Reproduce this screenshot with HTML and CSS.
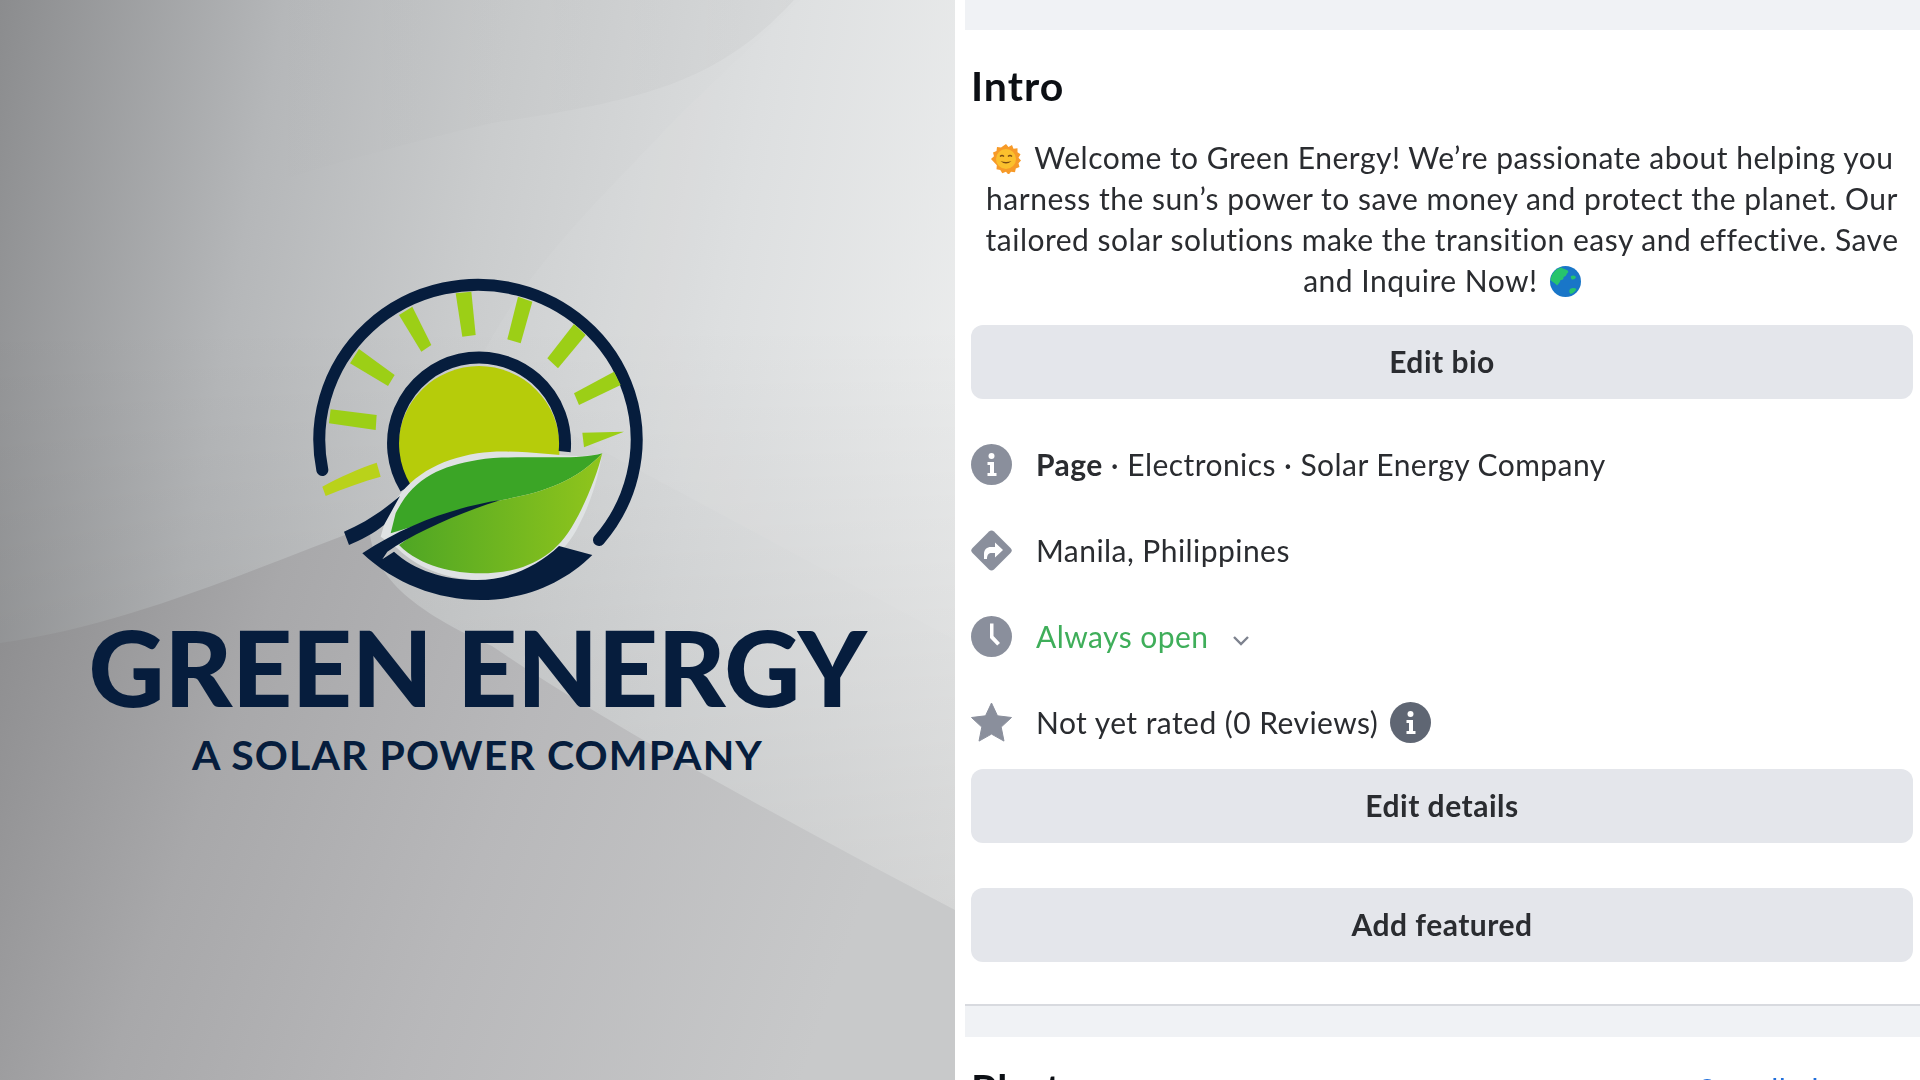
FILE: index.html
```html
<!DOCTYPE html>
<html lang="en">
<head>
  <meta charset="UTF-8">
  <meta name="viewport" content="width=device-width, initial-scale=1.0">
  <title>Green Energy - Intro</title>
  <link rel="stylesheet" href="styles.css">
</head>
<body>
  <div class="page">
    <div class="poster">
      <svg class="poster-bg" viewBox="0 0 955 1080" preserveAspectRatio="none">
        <defs>
          <linearGradient id="lowerShade" x1="0" y1="0" x2="1" y2="0.2">
            <stop offset="0" stop-color="#8b8b8d"/>
            <stop offset="0.3" stop-color="#a8a8aa"/>
            <stop offset="0.6" stop-color="#b8b8ba"/>
            <stop offset="1" stop-color="#c8c9ca"/>
          </linearGradient>
          <linearGradient id="topShade" x1="0" y1="0" x2="1" y2="0">
            <stop offset="0.3" stop-color="#000000" stop-opacity="0"/>
            <stop offset="1" stop-color="#000000" stop-opacity="0.03"/>
          </linearGradient>
        </defs>
        <path d="M794 0C720 80 650 100 492 123C400 145 300 170 200 210L0 80V0Z" fill="url(#topShade)"/>
        <path d="M677 117C600 200 520 270 470 380L955 640V0H800Z" fill="#ffffff" opacity="0.05"/>
        <path d="M0 643C130 625 250 570 369 526C372 570 400 605 492 646C600 720 769 812 955 910V1080H0Z" fill="url(#lowerShade)"/>
      </svg>

      <svg class="logo" viewBox="-8 0 1200 1110">
        <defs>
          <linearGradient id="leafLight" x1="0" y1="0" x2="1" y2="0">
            <stop offset="0" stop-color="#4ea624"/>
            <stop offset="1" stop-color="#90c51c"/>
          </linearGradient>
        </defs>
        <circle cx="595" cy="590" r="242" fill="#b6cc0a"/>
        <path d="M375 715A258 258 0 1 1 852 605" fill="none" stroke="#061d3d" stroke-width="36"/>
        <path d="M125 660A476 465 0 1 1 955 870" fill="none" stroke="#061d3d" stroke-width="36" stroke-linecap="round"/>
        <g fill="#9ccf16">
          <path d="M150 478L288 495L285 540L145 520Z"/>
          <path d="M235 297L342 375L322 408L208 340Z"/>
          <path d="M355 195L395 170L452 285L422 305Z"/>
          <path d="M525 130L572 125L585 255L545 260Z"/>
          <path d="M712 140L755 155L720 280L680 268Z"/>
          <path d="M880 222L915 255L832 355L800 325Z"/>
          <path d="M1000 365L1020 405L895 465L880 430Z"/>
        </g>
        <path d="M125 710C180 680 235 655 288 638L300 680C245 695 190 715 135 738Z" fill="#b9d21a"/>
        <path d="M905 548L1030 545L910 592Z" fill="#9ccf16"/>
        <path d="M965 610C880 635 720 590 590 610C470 630 380 680 320 790L300 860L350 895C420 965 520 990 600 990C730 990 840 940 895 825C935 750 955 670 965 610Z" fill="#dfe2e3"/>
        <path d="M965 610C880 635 720 610 590 630C480 650 400 680 345 790L330 850L650 752C780 730 880 700 965 610Z" fill="#3ba526"/>
        <path d="M965 610C880 700 780 730 650 752C540 775 440 820 355 885C420 950 520 970 600 970C720 970 820 930 880 820C920 750 950 670 965 610Z" fill="url(#leafLight)"/>
        <path d="M190 845C250 820 310 780 358 738L310 825C280 850 240 870 205 885Z" fill="#061d3d"/>
        <path d="M245 910C340 1000 470 1050 600 1050C730 1050 850 1000 935 915L835 888C770 950 680 990 590 990C490 990 400 960 340 905L305 928L320 905C400 850 530 790 660 750C530 770 380 820 245 910Z" fill="#061d3d"/>
      </svg>

      <div class="brand-name">GREEN ENERGY</div>
      <div class="brand-tag">A SOLAR POWER COMPANY</div>
    </div>

    <div class="profile">
      <div class="band band-top"></div>

      <section class="intro">
        <h2 class="title">Intro</h2>
        <p class="bio">
          <svg class="emoji emoji-sun" viewBox="0 0 30 30">
            <path d="M15 0l2.500 3 3.500-2 1.500 3.700 4-.5 0 4 3 2-2 3.500 2.500 2.800-2.500 2.800 1 3.700-3.700 1.500-.8 3.800-4-.5-2.500 3-2.500-3-3.700 1.500-2-3.300-3.800-.7.300-4L0 15l3-2.800-1-3.700 3.500-1.500.5-4 4 .5z" fill="#f79a28"/>
            <circle cx="15" cy="15" r="10" fill="#fbc02d"/>
            <path d="M9 12.500q2-2 4 0M17 12.500q2-2 4 0" fill="none" stroke="#7a4a12" stroke-width="1.300"/>
            <path d="M9.500 17q5.500 5 11 0q-5.500 1.800-11 0z" fill="#7a4a12"/>
          </svg>
          Welcome to Green Energy! We’re passionate about helping you<br>
          harness the sun’s power to save money and protect the planet. Our<br>
          tailored solar solutions make the transition easy and effective. Save<br>
          and Inquire Now!
          <svg class="emoji emoji-globe" viewBox="0 0 31 31">
            <circle cx="15.500" cy="15.500" r="15.500" fill="#1976c8"/>
            <path d="M11 1.500C6 3 1.500 7 .5 14c2 2.500 5 3 6.500 5.500 1.500-2 3-3 3.500-5.500 2 .5 3.500-1 3-3 2-.5 3-2 3.500-3.500 2-1 1.500-3-.5-3.500C15 3 13 2.500 11 1.500z" fill="#27c46d"/>
            <path d="M20 23c2.500-1.500 5-1 6.500 0-1.500 3-4 4.500-6 5-1.500-1.500-1.500-3.500-.5-5zM21 10c2-1 4-.5 5 1-.5 1.500-2 3-4 2.500-1 -1-1.500-2.500-1-3.500z" fill="#27c46d"/>
          </svg>
        </p>

        <button class="action action-bio">Edit bio</button>

        <ul class="facts">
          <li class="fact">
            <svg class="fact-icon" viewBox="0 0 41 41">
              <circle cx="20.500" cy="20.500" r="20.500" fill="#8a8f9c"/>
              <circle cx="20.500" cy="12" r="3" fill="#fff"/>
              <path d="M16.500 18h6.500v11h2.500v3h-9v-3h2.500v-8h-2.500z" fill="#fff"/>
            </svg>
            <span><b>Page</b> · Electronics · Solar Energy Company</span>
          </li>
          <li class="fact">
            <svg class="fact-icon" viewBox="0 0 41 41">
              <path d="M18 1.500q2.500-2 5 0l16.500 16.500q2.500 2.500 0 5L23 39.500q-2.500 2-5 0L1.500 23q-2.500-2.500 0-5z" fill="#8a8f9c"/>
              <path d="M13 29v-5c0-4.500 3-7 7-7h4v-4.500l8 7.500-8 7.500v-4.500h-3.500c-2.500 0-4.500 1.500-4.500 6z" fill="#fff"/>
            </svg>
            <span>Manila, Philippines</span>
          </li>
          <li class="fact">
            <svg class="fact-icon" viewBox="0 0 41 41">
              <circle cx="20.500" cy="20.500" r="20.500" fill="#8a8f9c"/>
              <path d="M19 7.500h3.500v12.500l6.500 7-2.800 2.500L19 22z" fill="#fff"/>
            </svg>
            <span class="open">Always open</span>
            <svg class="chevron" viewBox="0 0 18 12">
              <path d="M2 3l7 7 7-7" fill="none" stroke="#7d828e" stroke-width="2.400"/>
            </svg>
          </li>
          <li class="fact">
            <svg class="fact-icon" viewBox="0 0 41 41">
              <path d="M20.500 1l6 12.800 14 1.700-10.300 9.600 2.800 14-12.500-7-12.500 7 2.800-14L.5 15.500l14-1.700z" fill="#8a8f9c" stroke="#8a8f9c" stroke-linejoin="round"/>
            </svg>
            <span>Not yet rated (0 Reviews)</span>
            <svg class="rating-info" viewBox="0 0 41 41">
              <circle cx="20.500" cy="20.500" r="20.500" fill="#5f6673"/>
              <circle cx="20.500" cy="12" r="3" fill="#fff"/>
              <path d="M16.500 18h6.500v11h2.500v3h-9v-3h2.500v-8h-2.500z" fill="#fff"/>
            </svg>
          </li>
        </ul>

        <button class="action">Edit details</button>
        <button class="action action-featured">Add featured</button>
      </section>

      <div class="band band-bottom"></div>

      <section class="photos">
        <h2 class="title">Photos</h2>
        <a class="see-all" href="#">See all photos</a>
      </section>
    </div>
  </div>
</body>
</html>
```

FILE: styles.css
```css
* {
  box-sizing: border-box;
}

body {
  margin: 0;
  background: #ffffff;
  font-family: Lato, "Noto Sans", sans-serif;
  color: #2a2c30;
}

.page {
  display: flex;
  height: 1080px;
  overflow: hidden;
}

/* left picture */
.poster {
  position: relative;
  width: 955px;
  height: 1080px;
  flex-shrink: 0;
  padding-top: 250px;
  display: flex;
  flex-direction: column;
  align-items: center;
  overflow: hidden;
  background:
    linear-gradient(180deg, rgba(0, 0, 0, 0) 30%, rgba(0, 0, 0, 0.14) 100%),
    linear-gradient(100deg, #8b8c8e 0%, #b5b7b9 25%, #cacccd 45%, #dcdedf 68%, #f0f1f1 100%);
}

.poster-bg {
  position: absolute;
  left: 0;
  top: 0;
  width: 100%;
  height: 100%;
}

.logo {
  position: relative;
  width: 400px;
  height: 370px;
  flex-shrink: 0;
}

.brand-name {
  position: relative;
  margin-top: -7px;
  font-size: 105px;
  line-height: 107px;
  font-weight: 900;
  letter-spacing: -0.4px;
  color: #061d3d;
  white-space: nowrap;
}

.brand-tag {
  position: relative;
  margin-top: 10px;
  font-size: 41px;
  line-height: 50px;
  font-weight: 700;
  letter-spacing: 1.1px;
  color: #061d3d;
  white-space: nowrap;
}

/* right column */
.profile {
  margin-left: 10px;
  flex: 1;
  filter: blur(0.4px);
}

.band {
  background: #f0f2f5;
}

.band-top {
  height: 30px;
}

.band-bottom {
  height: 33px;
  margin-top: 42px;
  border-top: 2px solid #d8dadf;
}

.intro {
  padding: 0 7px 0 6px;
}

.title {
  margin: 0;
  padding-top: 33px;
  font-size: 41px;
  line-height: 46px;
  font-weight: 700;
  letter-spacing: 1px;
  color: #0c0f14;
}

.bio {
  margin: 28px 0 0;
  font-size: 30px;
  line-height: 41px;
  letter-spacing: 0.5px;
  text-align: center;
}

.emoji {
  vertical-align: -5px;
}

.emoji-sun {
  width: 30px;
  height: 30px;
  margin-right: 6px;
}

.emoji-globe {
  width: 31px;
  height: 31px;
  margin-left: 4px;
}

.action {
  display: block;
  width: 100%;
  height: 74px;
  padding: 0 0 2px;
  border: none;
  border-radius: 12px;
  background: #e4e6eb;
  font-family: inherit;
  font-size: 30px;
  font-weight: 700;
  letter-spacing: 0.5px;
  color: #2a2c30;
}

.action-bio {
  margin-top: 24px;
}

.action-featured {
  margin-top: 45px;
}

.facts {
  list-style: none;
  margin: 0;
  padding: 22px 0 4px;
}

.fact {
  display: flex;
  align-items: center;
  height: 86px;
  font-size: 30px;
  letter-spacing: 0.45px;
}

.fact b {
  font-weight: 700;
}

.fact-icon {
  width: 41px;
  height: 41px;
  margin-right: 24px;
  flex-shrink: 0;
}

.open {
  color: #3fae5a;
}

.chevron {
  width: 18px;
  height: 12px;
  margin: 8px 0 0 23px;
}

.rating-info {
  width: 41px;
  height: 41px;
  margin-left: 12px;
}

.photos {
  display: flex;
  justify-content: space-between;
  padding: 29px 32px 0 6px;
}

.photos .title {
  padding-top: 0;
}

.see-all {
  font-size: 30px;
  line-height: 46px;
  letter-spacing: 0.45px;
  color: #216fdb;
  text-decoration: none;
}
```
